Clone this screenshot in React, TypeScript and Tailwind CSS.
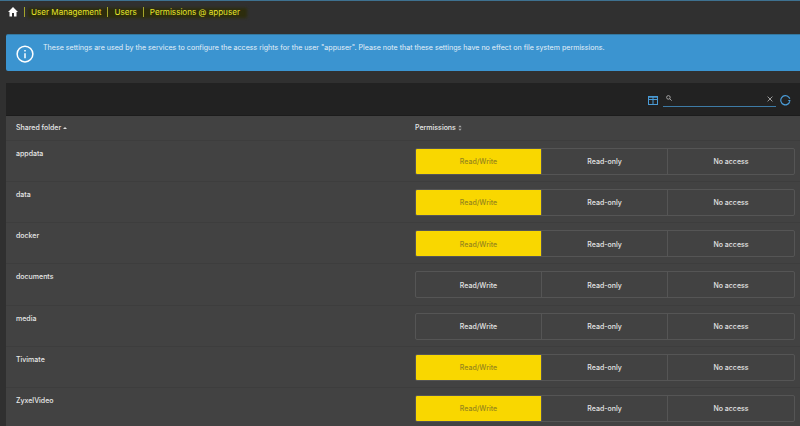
import React from "react";

const rows: [string, boolean][] = [
  ["appdata", true],
  ["data", true],
  ["docker", true],
  ["documents", false],
  ["media", false],
  ["Tivimate", true],
  ["ZyxelVideo", true],
];

function Sep() {
  return <span className="w-px h-[10px] bg-[#a5a52a]" />;
}

function Row({ name, rw }: { name: string; rw: boolean }) {
  return (
    <div className="h-[41.15px] flex border-b border-[#3d3d3d]">
      <div className="w-[409px] pl-[10px] pt-[7px] text-[7px] font-medium leading-[12px] text-[#e8e8e8]">{name}</div>
      <div className="pt-[7px]">
        <div className="w-[380px] h-[27px] flex rounded-[2px] border border-[#555555] text-[7px] font-medium text-[#e4e4e4] overflow-hidden">
          <div className={rw ? "w-[126px] pt-[2px] flex items-center justify-center bg-[#f9d700] text-[#97861c] border-r border-[#555555]" : "w-[126px] pt-[2px] flex items-center justify-center border-r border-[#555555]"}>Read/Write</div>
          <div className="w-[126px] pt-[2px] flex items-center justify-center border-r border-[#555555]">Read-only</div>
          <div className="flex-1 pt-[2px] flex items-center justify-center">No access</div>
        </div>
      </div>
    </div>
  );
}

export default function App() {
  return (
    <div className="w-[800px] h-[426px] overflow-hidden bg-[#303030] border-t border-[#3e7190] font-['Inter','Liberation_Sans',sans-serif]">
      <div className="h-[33px] pl-[7px] flex items-start pt-[5px]">
        <div className="relative flex items-center h-[12px] text-[8.1px] text-[#e6e62a]">
          <div className="absolute left-[21px] top-[2px] w-[219px] h-[10px] bg-[#2d2d0c] blur-[1.5px]" />
          <svg className="w-[12px] h-[12px] mr-[5px] relative" viewBox="0 0 24 24" fill="#ffffff">
            <path d="M10 21v-7h4v7h5v-9h3L12 2 2 12h3v9z" />
          </svg>
          <div className="relative flex items-center">
            <Sep />
            <span className="mx-[6px]">User Management</span>
            <Sep />
            <span className="mx-[6px]">Users</span>
            <Sep />
            <span className="ml-[6px]">Permissions @ appuser</span>
          </div>
        </div>
      </div>

      <div className="ml-[6px] h-[37px] bg-[#3b94d0] border-t border-[#34789f] rounded-l-[2px] flex text-[7.1px] text-[#e4f0f8]">
        <svg className="w-[18px] h-[18px] ml-[10px] mt-[10px]" viewBox="0 0 24 24" fill="none" stroke="#ffffff" strokeWidth="2">
          <circle cx="12" cy="12" r="10.5" />
          <path d="M12 11v6.5M12 6.5v2" />
        </svg>
        <div className="ml-[9px] mt-[7px] leading-[11px] whitespace-nowrap">
          These settings are used by the services to configure the access rights for the user "appuser". Please note that these settings have no effect on file system permissions.
        </div>
      </div>

      <div className="ml-[6px] mt-[12px] w-[794px] h-[33px] bg-[#222222] border-b border-[#1c1c1c] flex items-center justify-end pt-[1px]">
        <svg className="w-[10px] h-[9px] mr-[5px] mt-[2px]" viewBox="0 0 10 9" fill="none" stroke="#4a9bd6" strokeWidth="1">
          <rect x="0.5" y="0.5" width="9" height="8" />
          <path d="M0.5 3.5h9M5 1v8" />
          <path d="M0.5 1h9" strokeWidth="1.4" />
        </svg>
        <div className="relative w-[113px] h-[14px] border-b border-[#3e7ba6] mr-[4px]">
          <svg className="absolute left-[3px] top-[2px] w-[6px] h-[6px]" viewBox="0 0 10 10" fill="none" stroke="#b5b5b5" strokeWidth="1.4">
            <circle cx="4" cy="4" r="3" />
            <path d="M6.2 6.2 9.5 9.5" />
          </svg>
          <svg className="absolute right-[3px] top-[3px] w-[6px] h-[6px]" viewBox="0 0 10 10" fill="none" stroke="#b5b5b5" strokeWidth="1.4">
            <path d="M1 1l8 8M9 1l-8 8" />
          </svg>
        </div>
        <svg className="w-[11px] h-[11px] mr-[9px] mt-[2px]" viewBox="0 0 12 12" fill="none" stroke="#4a9bd6" strokeWidth="1.3">
          <path d="M10.7 7A5 5 0 1 1 9.5 2.3L10.8 4" />
          <path d="M8.6 5.4h3.2l-1.6 2z" fill="#4a9bd6" stroke="none" />
        </svg>
      </div>

      <div className="ml-[6px] w-[794px] bg-[#424242]">
        <div className="h-[25px] flex items-center text-[7px] font-medium text-[#e8e8e8] border-b border-[#3d3d3d]">
          <div className="w-[409px] pl-[10px] flex items-center gap-[2px]">
            Shared folder
            <svg className="w-[4px] h-[4px]" viewBox="0 0 6 6" fill="#dddddd"><path d="M3 1.5 6 4.5H0z" /></svg>
          </div>
          <div className="flex items-center gap-[2px]">
            Permissions
            <svg className="w-[4px] h-[6px]" viewBox="0 0 6 8" fill="#a8a8a8"><path d="M3 0 5.5 3H.5zM3 8 .5 5h5z" /></svg>
          </div>
        </div>
        {rows.map(([n, rw]) => (
          <Row key={n} name={n} rw={rw} />
        ))}
      </div>
    </div>
  );
}
